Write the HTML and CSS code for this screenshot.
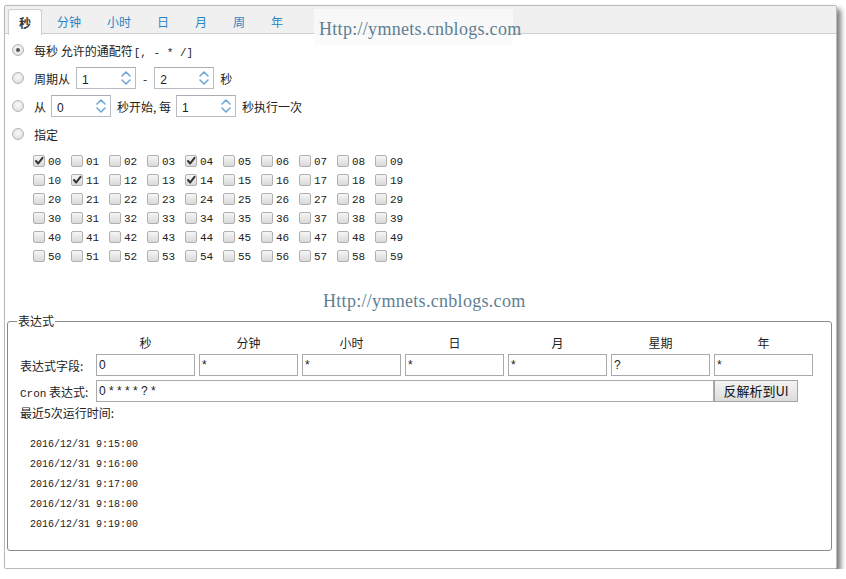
FILE: index.html
```html
<!DOCTYPE html>
<html lang="zh-CN">
<head>
<meta charset="utf-8">
<title>Cron</title>
<link rel="stylesheet" href="styles.css">
</head>
<body>
<div class="panel">
  <div class="tabbar">
    <div class="tab active">秒</div>
    <div class="tab">分钟</div>
    <div class="tab">小时</div>
    <div class="tab">日</div>
    <div class="tab">月</div>
    <div class="tab">周</div>
    <div class="tab">年</div>
  </div>
  <div class="wm wm1">Http://ymnets.cnblogs.com</div>
  <div class="content">
    <div class="row"><span class="radio on"></span><span>每秒 允许的通配符<span class="sym">[, - * /]</span></span></div>
    <div class="row"><span class="radio"></span><span>周期从</span>
      <span class="spin"><span class="val">1</span><svg class="arr" width="14" height="20" viewBox="0 0 14 20"><path d="M3 8 L7 4 L11 8" /><path d="M3 12 L7 16 L11 12" /></svg></span>
      <span class="dash">-</span>
      <span class="spin"><span class="val">2</span><svg class="arr" width="14" height="20" viewBox="0 0 14 20"><path d="M3 8 L7 4 L11 8" /><path d="M3 12 L7 16 L11 12" /></svg></span>
      <span>秒</span></div>
    <div class="row"><span class="radio"></span><span>从</span>
      <span class="spin s2"><span class="val">0</span><svg class="arr" width="14" height="20" viewBox="0 0 14 20"><path d="M3 8 L7 4 L11 8" /><path d="M3 12 L7 16 L11 12" /></svg></span>
      <span>秒开始, 每</span>
      <span class="spin s2"><span class="val">1</span><svg class="arr" width="14" height="20" viewBox="0 0 14 20"><path d="M3 8 L7 4 L11 8" /><path d="M3 12 L7 16 L11 12" /></svg></span>
      <span>秒执行一次</span></div>
    <div class="row"><span class="radio"></span><span>指定</span></div>
    <div class="grid" id="grid"></div>
  </div>
  <div class="wm wm2">Http://ymnets.cnblogs.com</div>
  <fieldset class="expr">
    <legend>表达式</legend>
    <div class="cols hdr">
      <span></span><span>秒</span><span>分钟</span><span>小时</span><span>日</span><span>月</span><span>星期</span><span>年</span>
    </div>
    <div class="cols fields">
      <span class="lbl">表达式字段:</span>
      <span class="box">0</span><span class="box">*</span><span class="box">*</span><span class="box">*</span><span class="box">*</span><span class="box">?</span><span class="box">*</span>
    </div>
    <div class="cron">
      <span class="lbl cl"><span class="mono">Cron</span> 表达式:</span>
      <span class="box wide">0 * * * * ? *</span>
      <span class="btn">反解析到UI</span>
    </div>
    <div class="recent">最近5次运行时间:</div>
    <div class="times">
      <div>2016/12/31 9:15:00</div>
      <div>2016/12/31 9:16:00</div>
      <div>2016/12/31 9:17:00</div>
      <div>2016/12/31 9:18:00</div>
      <div>2016/12/31 9:19:00</div>
    </div>
  </fieldset>
</div>
<script>
  var checked = [0, 4, 11, 14];
  var g = document.getElementById('grid');
  for (var i = 0; i < 60; i++) {
    var c = document.createElement('div');
    c.className = 'cell';
    var b = document.createElement('span');
    b.className = 'cb' + (checked.indexOf(i) >= 0 ? ' on' : '');
    if (checked.indexOf(i) >= 0) {
      b.innerHTML = '<svg width="10" height="10" viewBox="0 0 10 10"><path d="M2 5 L4.2 7.5 L8.5 1.8" /></svg>';
    }
    var t = document.createElement('span');
    t.className = 'num';
    t.textContent = (i < 10 ? '0' : '') + i;
    c.appendChild(b); c.appendChild(t);
    g.appendChild(c);
  }
</script>
</body>
</html>
```
FILE: styles.css
```css
html, body {
  margin: 0;
  padding: 0;
  background: #ffffff;
}
body {
  font-family: "Noto Sans CJK SC", "Liberation Sans", sans-serif;
  font-size: 12px;
  color: #222;
}
.panel {
  position: relative;
  box-sizing: border-box;
  margin: 5px 0 0 4px;
  width: 833px;
  height: 564px;
  border: 1px solid #b9b9b9;
  border-radius: 2px;
  background: #fff;
  box-shadow: 4px 4px 5px rgba(0, 0, 0, 0.5);
}
.tabbar {
  display: flex;
  height: 28px;
  box-sizing: border-box;
  padding: 3px 0 0 3px;
  background: #f0f0f0;
  border-bottom: 1px solid #cfcfcf;
}
.tab {
  padding: 0 11px;
  margin-right: 4px;
  height: 25px;
  line-height: 25px;
  color: #2a84c4;
  box-sizing: border-box;
}
.tab.active {
  color: #333;
  font-weight: bold;
  background: #fff;
  border: 1px solid #cfcfcf;
  border-bottom: none;
  border-radius: 3px 3px 0 0;
  height: 26px;
  padding: 0 10px;
}
.wm {
  position: absolute;
  font-family: "Liberation Serif", "DejaVu Serif", serif;
  font-size: 18px;
  color: #5f7f93;
  letter-spacing: 0.3px;
  white-space: nowrap;
}
.wm1 {
  left: 309px;
  top: 3px;
  width: 194px;
  height: 36px;
  line-height: 40px;
  padding-left: 5px;
  background: rgba(250, 250, 250, 0.8);
}
.wm2 {
  left: 318px;
  top: 283px;
  line-height: 24px;
}
.content {
  padding: 2px 0 0 7px;
}
.row {
  display: flex;
  align-items: center;
  height: 28px;
  white-space: nowrap;
}
.sym {
  font-family: "Liberation Mono", "DejaVu Sans Mono", monospace;
  font-size: 11px;
  margin-left: 1px;
}
.radio {
  width: 12px;
  height: 12px;
  box-sizing: border-box;
  border-radius: 50%;
  border: 1px solid #b4b4b4;
  background: radial-gradient(circle at 50% 40%, #fafafa 0, #e6e6e6 60%, #d4d4d4 100%);
  margin-right: 10px;
  position: relative;
}
.radio.on::after {
  content: "";
  position: absolute;
  left: 3px;
  top: 3px;
  width: 4px;
  height: 4px;
  border-radius: 50%;
  background: #555;
}
.spin {
  position: relative;
  display: inline-flex;
  align-items: center;
  box-sizing: border-box;
  width: 60px;
  height: 22px;
  border: 1px solid #b8bcc4;
  border-top-color: #abadb3;
  margin: 0 6px;
  background: #fff;
  font-family: "Liberation Sans", sans-serif;
  font-size: 12px;
}
.spin .val {
  padding-left: 5px;
  padding-top: 3px;
  flex: 1;
}
.arr {
  margin-right: 2px;
}
.arr path {
  fill: none;
  stroke: #6fa8d8;
  stroke-width: 1.6;
  stroke-linecap: round;
  stroke-linejoin: round;
}
.spin.s2 {
  margin: 0 6px 0 5px;
}
.dash {
  margin: 0 1px;
}
.grid {
  display: grid;
  grid-template-columns: repeat(10, 38px);
  grid-auto-rows: 19px;
  padding-left: 21px;
  margin-top: 3px;
}
.cell {
  display: flex;
  align-items: center;
}
.cb {
  display: inline-flex;
  align-items: center;
  justify-content: center;
  width: 12px;
  height: 12px;
  box-sizing: border-box;
  border: 1px solid #b0b0b0;
  border-radius: 2px;
  background: linear-gradient(#f6f6f6, #d9d9d9);
  margin-right: 3px;
}
.cb svg path {
  fill: none;
  stroke: #333;
  stroke-width: 2;
  stroke-linecap: round;
  stroke-linejoin: round;
}
.num, .mono {
  font-family: "Liberation Mono", "DejaVu Sans Mono", monospace;
  font-size: 11px;
  color: #222;
  padding-top: 2px;
}
.expr {
  margin: 48px 4px 0 2px;
  padding: 0 17px 0 9px;
  border: 1px solid #8a8a8a;
  border-radius: 3px;
  height: 238px;
  box-sizing: border-box;
}
.expr legend {
  padding: 0 1px;
  line-height: 16px;
  color: #222;
}
.cols {
  display: grid;
  grid-template-columns: 72px repeat(7, 99px);
  column-gap: 4px;
  margin-left: 3px;
}
.hdr {
  height: 20px;
  line-height: 20px;
  margin-top: 4px;
  text-align: center;
}
.fields {
  height: 22px;
  align-items: center;
  margin-top: 1px;
}
.lbl {
  white-space: nowrap;
}
.box {
  box-sizing: border-box;
  height: 22px;
  border: 1px solid #a9a9a9;
  padding: 3px 0 0 2px;
  font-family: "Liberation Sans", sans-serif;
  font-size: 12px;
  line-height: 15px;
  background: #fff;
  white-space: pre;
}
.cron {
  display: flex;
  align-items: center;
  margin: 4px 0 0 3px;
  height: 22px;
}
.cron .cl {
  width: 76px;
}
.box.wide {
  width: 618px;
}
.btn {
  box-sizing: border-box;
  width: 84px;
  height: 22px;
  line-height: 20px;
  text-align: center;
  border: 1px solid #a3a3a3;
  background: linear-gradient(#f4f4f4, #dcdcdc);
  font-size: 13px;
  color: #111;
}
.recent {
  margin: 3px 0 0 3px;
  line-height: 16px;
}
.times {
  margin: 14px 0 0 13px;
  font-family: "Liberation Mono", "DejaVu Sans Mono", monospace;
  font-size: 10px;
  color: #222;
}
.times div {
  height: 20px;
  line-height: 20px;
}
```
